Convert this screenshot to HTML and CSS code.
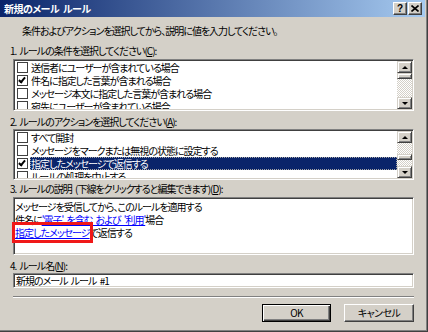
FILE: index.html
```html
<!DOCTYPE html>
<html lang="ja">
<head>
  <meta charset="UTF-8">
  <title>新規のメール ルール</title>
  <link rel="stylesheet" href="styles.css">
</head>
<body>
  <div class="window">
    <div class="titlebar">
      <span class="title">新規のメール ルール</span>
      <div class="caption-buttons">
        <span class="cap-btn help">?</span>
        <span class="cap-btn">
          <svg width="8" height="7" viewBox="0 0 8 7"><path d="M0.5 0.5 L7.5 6.5 M7.5 0.5 L0.5 6.5" stroke="#000" stroke-width="1.6" fill="none"/></svg>
        </span>
      </div>
    </div>

    <div class="content">
      <p class="intro">条件およびアクションを選択してから、説明に値を入力してください。</p>

      <p class="label">1. ルールの条件を選択してください(<u>C</u>):</p>
      <div class="listbox list-conditions">
        <ul class="rows">
          <li><span class="check"></span><span class="text">送信者にユーザーが含まれている場合</span></li>
          <li><span class="check checked"></span><span class="text">件名に指定した言葉が含まれる場合</span></li>
          <li><span class="check"></span><span class="text">メッセージ本文に指定した言葉が含まれる場合</span></li>
          <li><span class="check"></span><span class="text">宛先にユーザーが含まれている場合</span></li>
        </ul>
        <div class="scrollbar">
          <span class="arrow up"></span>
          <div class="track"><span class="thumb"></span></div>
          <span class="arrow down"></span>
        </div>
      </div>

      <p class="label">2. ルールのアクションを選択してください(<u>A</u>):</p>
      <div class="listbox list-actions">
        <ul class="rows">
          <li><span class="check"></span><span class="text">すべて開封</span></li>
          <li><span class="check"></span><span class="text">メッセージをマークまたは無視の状態に設定する</span></li>
          <li class="selected"><span class="check checked"></span><span class="text">指定したメッセージで返信する</span></li>
          <li><span class="check"></span><span class="text">ルールの処理を中止する</span></li>
        </ul>
        <div class="scrollbar">
          <span class="arrow up"></span>
          <div class="track"><span class="thumb"></span></div>
          <span class="arrow down"></span>
        </div>
      </div>

      <p class="label">3. ルールの説明 (下線をクリックすると編集できます)(<u>D</u>):</p>
      <div class="description">
        <p>メッセージを受信してから、このルールを適用する</p>
        <p>件名に<a href="#">'電子' を含む および '利用'</a>場合</p>
        <p><a href="#" class="marked">指定したメッセージ</a>で返信する</p>
      </div>

      <p class="label">4. ルール名(<u>N</u>):</p>
      <div class="name-field">新規のメール ルール #1</div>

      <div class="separator"></div>

      <div class="buttons">
        <button class="default">OK</button>
        <button>キャンセル</button>
      </div>
    </div>
  </div>
</body>
</html>
```

FILE: styles.css
```css
html, body {
  margin: 0;
  padding: 0;
}
body {
  width: 428px;
  height: 332px;
  overflow: hidden;
  background: #d4d0c8;
  font-family: "Noto Sans CJK JP", "Liberation Sans", sans-serif;
  font-size: 10px;
  letter-spacing: -1px;
  word-spacing: 2px;
  font-feature-settings: "palt";
  color: #000;
}
p {
  margin: 0;
}
.window {
  height: 332px;
  box-sizing: border-box;
  border-right: 1px solid #404040;
  border-bottom: 1px solid #404040;
  box-shadow: inset -1px -1px 0 #808080;
  padding-right: 2px;
}
.titlebar {
  height: 17px;
  display: flex;
  align-items: center;
  justify-content: space-between;
  background: linear-gradient(to right, #0a246a, #a6caf0);
  padding: 0 3px 0 4px;
}
.title {
  color: #fff;
  font-weight: bold;
  letter-spacing: -0.5px;
  line-height: 17px;
}
.caption-buttons {
  display: flex;
  gap: 1px;
}
.cap-btn {
  width: 12px;
  height: 11px;
  background: #d4d0c8;
  display: flex;
  align-items: center;
  justify-content: center;
  border: 1px solid;
  border-color: #fff #404040 #404040 #fff;
  box-shadow: inset -1px -1px 0 #808080;
  font-family: "Liberation Sans", sans-serif;
  font-weight: bold;
  font-size: 10px;
  letter-spacing: 0;
  line-height: 11px;
}
.content {
  padding: 0 11px 0 13px;
}
.intro {
  margin: 7px 0 0 9px;
  line-height: 13px;
}
.label {
  margin-left: -3px;
  line-height: 13px;
}
.label u {
  text-decoration: underline;
}
.intro + .label {
  margin-top: 7px;
}
.listbox {
  display: flex;
  height: 52px;
  box-sizing: border-box;
  margin-top: 2px;
  border: 1px solid;
  border-color: #808080 #fff #fff #808080;
  box-shadow: inset 1px 1px 0 #404040, inset -1px -1px 0 #d4d0c8;
  padding: 1px;
  background: #fff;
  overflow: hidden;
}
.listbox + .label {
  margin-top: 4px;
}
.list-actions {
  margin-top: 1px;
  height: 51px;
}
.rows {
  list-style: none;
  margin: 0;
  padding: 0 0 0 2px;
  flex: 1;
  overflow: hidden;
}
.rows li {
  display: flex;
  align-items: center;
  height: 13px;
  white-space: nowrap;
}
.check {
  width: 9px;
  height: 9px;
  border: 1px solid #404040;
  background: #fff;
  flex: none;
  margin-right: 2px;
  position: relative;
}
.check.checked::after {
  content: "";
  position: absolute;
  left: 2px;
  top: 0px;
  width: 2px;
  height: 5px;
  border: solid #000;
  border-width: 0 2px 2px 0;
  transform: rotate(40deg);
}
.text {
  flex: 1;
  line-height: 13px;
  padding-left: 1px;
}
.selected .text {
  background: #0a246a;
  color: #fff;
  outline: 1px dotted #a6a6a6;
  outline-offset: -1px;
}
.scrollbar {
  width: 15px;
  flex: none;
  display: flex;
  flex-direction: column;
}
.arrow {
  height: 12px;
  box-sizing: border-box;
  background: #d4d0c8;
  border: 1px solid;
  border-color: #d4d0c8 #404040 #404040 #d4d0c8;
  box-shadow: inset 1px 1px 0 #fff, inset -1px -1px 0 #808080;
  display: flex;
  align-items: center;
  justify-content: center;
  flex: none;
}
.arrow::before {
  content: "";
  border-left: 3px solid transparent;
  border-right: 3px solid transparent;
}
.arrow.up::before {
  border-bottom: 3px solid #000;
}
.arrow.down::before {
  border-top: 3px solid #000;
}
.track {
  flex: 1;
  display: flex;
  flex-direction: column;
  background: repeating-conic-gradient(#fff 0 25%, #d4d0c8 0 50%) 0 0 / 2px 2px;
}
.thumb {
  height: 6px;
  box-sizing: border-box;
  background: #d4d0c8;
  border: 1px solid;
  border-color: #d4d0c8 #404040 #404040 #d4d0c8;
  box-shadow: inset 1px 1px 0 #fff, inset -1px -1px 0 #808080;
}
.list-actions .thumb {
  margin-top: 11px;
}
.label + .description {
  margin-top: 2px;
}
.description {
  height: 58px;
  box-sizing: border-box;
  border: 1px solid;
  border-color: #808080 #fff #fff #808080;
  box-shadow: inset 1px 1px 0 #404040, inset -1px -1px 0 #d4d0c8;
  background: #fff;
  padding: 2px 2px 0 1px;
}
.list-actions + .label {
  margin-top: 2px;
}
.description p {
  line-height: 13px;
  white-space: nowrap;
}
.description a {
  color: #0000ff;
  text-decoration: underline;
}
.description a.marked {
  outline: 3px solid #f01818;
  outline-offset: 0;
}
.description + .label {
  margin-top: 4px;
}
.name-field {
  margin-top: 1px;
  height: 15px;
  box-sizing: border-box;
  border: 1px solid;
  border-color: #808080 #fff #fff #808080;
  box-shadow: inset 1px 1px 0 #404040, inset -1px -1px 0 #d4d0c8;
  background: #fff;
  padding: 0 2px;
  line-height: 13px;
  white-space: nowrap;
  overflow: hidden;
}
.separator {
  margin-top: 8px;
  border-top: 1px solid #808080;
  border-bottom: 1px solid #fff;
}
.buttons {
  margin-top: 6px;
  display: flex;
  justify-content: flex-end;
  gap: 13px;
}
button {
  width: 70px;
  height: 18px;
  box-sizing: border-box;
  background: #d4d0c8;
  border: 1px solid;
  border-color: #fff #404040 #404040 #fff;
  box-shadow: inset -1px -1px 0 #808080;
  font-family: "Noto Sans CJK JP", "Liberation Sans", sans-serif;
  font-size: 10px;
  letter-spacing: -0.6px;
  font-feature-settings: "palt";
  line-height: 14px;
  padding: 0;
  color: #000;
}
button.default {
  width: 69px;
  border: 1px solid #000;
  box-shadow: inset 1px 1px 0 #fff, inset -1px -1px 0 #404040, inset -2px -2px 0 #808080;
}
```
